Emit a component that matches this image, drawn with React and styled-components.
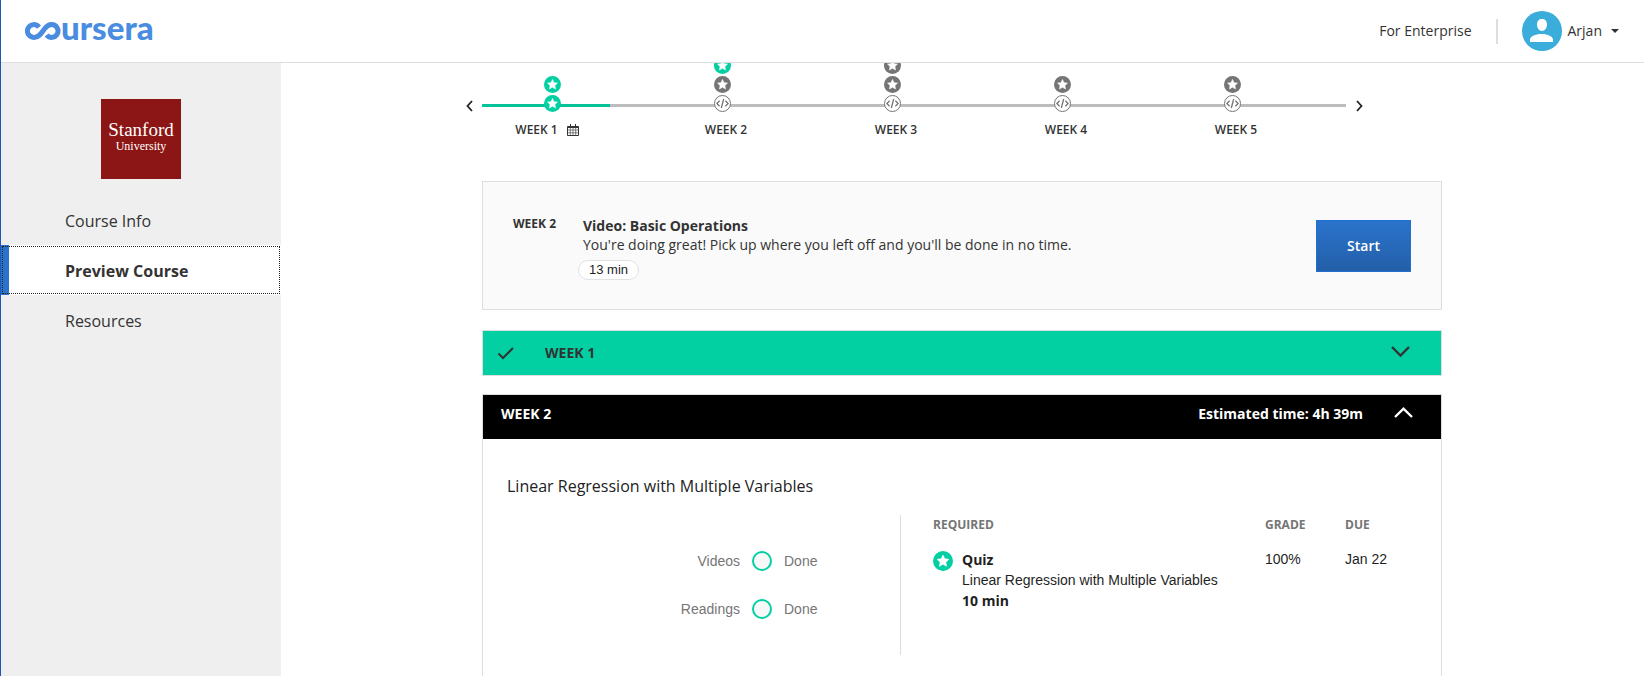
import React from 'react';
import styled, { createGlobalStyle } from 'styled-components';

const green = '#02cfa2';
const line = '#dedede';
const ink = '#333333';
const muted = '#757575';
const sans = '"Open Sans", "Noto Sans", sans-serif';
const arial = '"Liberation Sans", Arial, sans-serif';

const GlobalStyle = createGlobalStyle`
  * { box-sizing: border-box; }
  body {
    margin: 0;
    background: #fff;
    color: ${ink};
    font: 14px/20px ${sans};
  }
  button { font: inherit; cursor: pointer; }
  a { color: inherit; text-decoration: none; }
`;

const Shell = styled.div`
  display: flex;
  flex-direction: column;
  height: 100vh;
  border-left: 1px solid #1f57b5;
`;

const Header = styled.header`
  display: flex;
  align-items: center;
  justify-content: space-between;
  flex: none;
  height: 63px;
  padding: 0 25px 0 24px;
  border-bottom: 1px solid ${line};
`;

const Logo = styled.a`
  display: flex;
  align-items: baseline;
  padding-bottom: 8px;
  color: #4a8de0;
  font: 900 33px/40px Lato, sans-serif;
`;

const LogoMark = styled.svg`
  display: block;
  width: 36px;
  height: 18px;
`;

const HeaderNav = styled.nav`
  display: flex;
  align-items: center;
`;

const Divider = styled.span`
  width: 2px;
  height: 25px;
  margin: 0 24px;
  background: ${line};
`;

const UserButton = styled.button`
  display: flex;
  align-items: center;
  gap: 6px;
  padding: 0;
  border: 0;
  background: none;
  color: ${ink};
`;

const UserName = styled.span`
  margin-right: 3px;
`;

const Columns = styled.div`
  display: flex;
  flex: 1;
  min-height: 0;
`;

const Sidebar = styled.aside`
  flex: none;
  width: 280px;
  padding-top: 36px;
  background: #efefef;
`;

const Partner = styled.div`
  display: flex;
  flex-direction: column;
  align-items: center;
  width: 80px;
  height: 80px;
  margin: 0 auto 16px;
  padding-top: 21px;
  background: #8c1515;
  color: #fff;
  font: 19px/20px "Liberation Serif", serif;
`;

const PartnerSub = styled.span`
  font-size: 12px;
  line-height: 12px;
`;

const SideLink = styled.a`
  display: flex;
  align-items: center;
  height: 50px;
  padding-top: 2px;
  padding-left: ${(p) => (p.$active ? 56 : 64)}px;
  border-left: ${(p) => (p.$active ? '8px solid #2a73cc' : '0')};
  background: ${(p) => (p.$active ? '#fff' : 'none')};
  outline: ${(p) => (p.$active ? '1px dotted #222' : 'none')};
  outline-offset: -2px;
  font-size: 16px;
  font-weight: ${(p) => (p.$active ? 700 : 400)};
`;

const Main = styled.main`
  flex: 1;
  min-width: 0;
  padding-right: 1px;
  overflow: hidden;
`;

const Content = styled.div`
  max-width: 960px;
  margin: 0 auto;
`;

const Timeline = styled.section`
  display: flex;
  margin: 0 0 43px -24px;
`;

const ArrowButton = styled.button`
  display: flex;
  align-items: center;
  justify-content: center;
  width: 24px;
  height: 16px;
  margin-top: 35px;
  padding: ${(p) => (p.$next ? '0 0 0 2px' : '0 2px 0 0')};
  border: 0;
  background: none;
  color: #222;
`;

const Track = styled.div`
  display: grid;
  width: 864px;
`;

const TrackLine = styled.div`
  grid-area: 1 / 1;
  height: 3px;
  margin-top: 41px;
  background: linear-gradient(to right, #06c298 128px, #bdbdbd 128px);
`;

const Stops = styled.ol`
  display: grid;
  grid-area: 1 / 1;
  grid-template-columns: repeat(5, 170px);
  margin: 0;
  padding: 0;
  list-style: none;
`;

const Stack = styled.div`
  display: flex;
  flex-direction: column-reverse;
  gap: 2px;
  height: 49px;
  margin-bottom: 10px;
  padding-left: 62px;
  overflow: hidden;
`;

const StopLabel = styled.div`
  display: flex;
  align-items: center;
  justify-content: center;
  width: 148px;
  font-size: 12px;
  font-weight: 600;
  line-height: 16px;
`;

const Calendar = styled.svg`
  flex: none;
  width: 12px;
  height: 12px;
  margin: 0 18px 0 9px;
`;

const Icon = styled.svg`
  display: block;
  flex: none;
`;

const NextCard = styled.section`
  display: flex;
  align-items: center;
  height: 129px;
  margin-bottom: 20px;
  padding: 0 30px;
  border: 1px solid ${line};
  background: #fafafa;
`;

const CardWeek = styled.div`
  flex: none;
  width: 70px;
  height: 60px;
  font-size: 12px;
  font-weight: 700;
  line-height: 16px;
`;

const CardText = styled.div`
  flex: 1;
  padding-top: 4px;
`;

const CardTitle = styled.h2`
  margin: 0;
  font-size: 14px;
  font-weight: 700;
  line-height: 19px;
`;

const CardBody = styled.p`
  margin: 0;
  line-height: 19px;
`;

const Pill = styled.span`
  display: inline-block;
  margin: 6px 0 0 -5px;
  padding: 0 10px;
  border: 1px solid #e1e1e1;
  border-radius: 10px;
  background: #fff;
  color: #222;
  font: 13px/18px ${arial};
`;

const StartButton = styled.button`
  width: 95px;
  height: 52px;
  border: 1px solid #1f70d0;
  background: linear-gradient(#2a73cc, #245fa8);
  color: #fff;
  font-weight: 600;
`;

const Week = styled.section`
  margin-bottom: 18px;
  border: 1px solid ${line};
`;

const WeekHeader = styled.button`
  display: flex;
  align-items: center;
  width: 100%;
  height: 44px;
  padding: ${(p) => (p.$done ? '0 31px 0 14px' : '0 28px 6px 18px')};
  border: 0;
  background: ${(p) => (p.$done ? green : '#000')};
  color: ${(p) => (p.$done ? ink : '#fff')};
  font-weight: 700;
`;

const WeekName = styled.span`
  margin-left: ${(p) => (p.$indent ? '30px' : '0')};
  margin-right: auto;
`;

const Estimate = styled.span`
  margin-right: 31px;
`;

const WeekBody = styled.div`
  padding: 35px 24px 40px;
`;

const ModuleTitle = styled.h3`
  margin: 0 0 17px;
  color: #222;
  font-size: 16px;
  font-weight: 400;
  line-height: 24px;
`;

const Details = styled.div`
  display: flex;
  min-height: 140px;
`;

const ProgressList = styled.ul`
  display: flex;
  flex: none;
  flex-direction: column;
  gap: 28px;
  width: 394px;
  margin: 0;
  padding: 36px 0 0;
  border-right: 1px solid ${line};
  list-style: none;
`;

const ProgressRow = styled.li`
  display: grid;
  grid-template-columns: 233px 20px 1fr;
  gap: 12px;
  color: ${muted};
  font-family: ${arial};
`;

const ProgressLabel = styled.span`
  text-align: right;
`;

const Ring = styled.span`
  height: 20px;
  border: 2px solid ${green};
  border-radius: 50%;
  background: #f8f8f8;
`;

const Required = styled.table`
  flex: 1;
  align-self: flex-start;
  margin-left: 32px;
  border-collapse: collapse;
  color: #1f1f1f;
  font: 14px/20px ${arial};
`;

const Th = styled.th`
  width: ${(p) => p.$width || 'auto'};
  padding: 2px 0 16px;
  color: ${muted};
  font: 700 12px/16px ${sans};
  text-align: left;
`;

const Td = styled.td`
  padding: 0;
  vertical-align: top;
`;

const Item = styled.div`
  display: flex;
  gap: 9px;
  padding-top: 1px;

  svg {
    margin-top: 1px;
  }
`;

const ItemStrong = styled.div`
  font-family: ${sans};
  font-weight: 700;
`;

const ItemName = styled.div`
  line-height: 21px;
`;

const starPoints = '10,4 11.8,7.8 15.9,8.3 12.9,11.2 13.6,15.3 10,13.3 6.4,15.3 7.1,11.2 4.1,8.3 8.2,7.8';

function StarBadge({ size = 17, color = green }) {
  return (
    <Icon width={size} height={size} viewBox="0 0 20 20" aria-hidden="true">
      <circle cx="10" cy="10" r="10" fill={color} />
      <polygon points={starPoints} fill="#fff" stroke="#fff" strokeWidth="0.6" strokeLinejoin="round" />
    </Icon>
  );
}

function CodeBadge() {
  return (
    <Icon width="17" height="17" viewBox="0 0 17 17" fill="none" stroke="#757575" aria-hidden="true">
      <circle cx="8.5" cy="8.5" r="8" fill="#fff" />
      <path d="M5.6 5.8 2.9 8.5l2.7 2.7M11.4 5.8l2.7 2.7-2.7 2.7M9.7 4 7.3 13" strokeWidth="1.3" />
    </Icon>
  );
}

function Chevron({ d, w, h, stroke }) {
  return (
    <Icon width={w} height={h} viewBox={`0 0 ${w} ${h}`} fill="none" stroke="currentColor" strokeWidth={stroke} aria-hidden="true">
      <path d={d} />
    </Icon>
  );
}

const badges = {
  done: () => <StarBadge />,
  quiz: () => <StarBadge color="#757575" />,
  code: () => <CodeBadge />,
};

const stops = [
  { name: 'WEEK 1', items: ['done', 'done'], calendar: true },
  { name: 'WEEK 2', items: ['code', 'quiz', 'done'] },
  { name: 'WEEK 3', items: ['code', 'quiz', 'quiz'] },
  { name: 'WEEK 4', items: ['code', 'quiz'] },
  { name: 'WEEK 5', items: ['code', 'quiz'] },
];

function Stop({ name, items, calendar }) {
  return (
    <li>
      <Stack>
        {items.map((kind, i) => (
          <React.Fragment key={i}>{badges[kind]()}</React.Fragment>
        ))}
      </Stack>
      <StopLabel>
        {name}
        {calendar && (
          <Calendar viewBox="0 0 12 12" fill="none" stroke="#333" aria-hidden="true">
            <path d="M.5 2.5h11v9H.5zM.5 3.5h11M3.5 0v3M8.5 0v3" />
            <path d="M.5 6h11M.5 8.8h11M3.3 3.5v8M6 3.5v8M8.7 3.5v8" strokeWidth="0.6" />
          </Calendar>
        )}
      </StopLabel>
    </li>
  );
}

export default function App() {
  return (
    <Shell>
      <GlobalStyle />
      <Header>
        <Logo href="#home" aria-label="coursera">
          <LogoMark viewBox="0 0 36 18" fill="none" stroke="currentColor" strokeWidth="5" aria-hidden="true">
            <path d="M14 5.200A6.400 6.400 0 1 0 9 15.400C14 15.400 16.500 11 19.300 7.200 21.500 4 23.500 2.600 26.600 2.600A6.400 6.400 0 1 1 21.600 13" />
          </LogoMark>
          ursera
        </Logo>
        <HeaderNav>
          <a href="#enterprise">For Enterprise</a>
          <Divider />
          <UserButton>
            <Icon width="40" height="40" viewBox="0 0 40 40" aria-hidden="true">
              <circle cx="20" cy="20" r="20" fill="#3aaddb" />
              <path fill="#fff" d="M20 8c3 0 5 2 5 5.500 0 3.500-2 6.500-5 6.500s-5-3-5-6.500C15 10 17 8 20 8ZM8 31v-2.500C8 25.500 13 23 19.500 23S31 25.500 31 28.500V31Z" />
            </Icon>
            <UserName>Arjan</UserName>
            <Icon width="8" height="4" viewBox="0 0 8 4" aria-hidden="true">
              <path d="M0 0h8L4 4Z" fill="#333" />
            </Icon>
          </UserButton>
        </HeaderNav>
      </Header>
      <Columns>
        <Sidebar>
          <Partner>
            Stanford
            <PartnerSub>University</PartnerSub>
          </Partner>
          <nav>
            <SideLink href="#info">Course Info</SideLink>
            <SideLink href="#preview" $active aria-current="page">Preview Course</SideLink>
            <SideLink href="#resources">Resources</SideLink>
          </nav>
        </Sidebar>
        <Main>
          <Content>
            <Timeline>
              <ArrowButton aria-label="Previous weeks">
                <Chevron w={7} h={12} d="M6 1 1.500 6 6 11" stroke={1.8} />
              </ArrowButton>
              <Track>
                <TrackLine />
                <Stops>
                  {stops.map((s) => (
                    <Stop key={s.name} {...s} />
                  ))}
                </Stops>
              </Track>
              <ArrowButton $next aria-label="Next weeks">
                <Chevron w={7} h={12} d="M1 1l4.500 5L1 11" stroke={1.8} />
              </ArrowButton>
            </Timeline>

            <NextCard>
              <CardWeek>WEEK 2</CardWeek>
              <CardText>
                <CardTitle>Video: Basic Operations</CardTitle>
                <CardBody>You're doing great! Pick up where you left off and you'll be done in no time.</CardBody>
                <Pill>13 min</Pill>
              </CardText>
              <StartButton>Start</StartButton>
            </NextCard>

            <Week>
              <WeekHeader $done aria-expanded="false">
                <Chevron w={18} h={14} d="M1.500 7.500 6 12 16 2" stroke={2} />
                <WeekName $indent>WEEK 1</WeekName>
                <Chevron w={19} h={15} d="M1 1l8.500 8.500L18 1" stroke={2.4} />
              </WeekHeader>
            </Week>

            <Week>
              <WeekHeader aria-expanded="true">
                <WeekName>WEEK 2</WeekName>
                <Estimate>Estimated time: 4h 39m</Estimate>
                <Chevron w={19} h={15} d="M1 10 9.500 1.700 18 10" stroke={2.4} />
              </WeekHeader>
              <WeekBody>
                <ModuleTitle>Linear Regression with Multiple Variables</ModuleTitle>
                <Details>
                  <ProgressList>
                    {['Videos', 'Readings'].map((label) => (
                      <ProgressRow key={label}>
                        <ProgressLabel>{label}</ProgressLabel>
                        <Ring />
                        <span>Done</span>
                      </ProgressRow>
                    ))}
                  </ProgressList>
                  <Required>
                    <thead>
                      <tr>
                        <Th>REQUIRED</Th>
                        <Th $width="80px">GRADE</Th>
                        <Th $width="72px">DUE</Th>
                      </tr>
                    </thead>
                    <tbody>
                      <tr>
                        <Td>
                          <Item>
                            <StarBadge size={20} />
                            <div>
                              <ItemStrong>Quiz</ItemStrong>
                              <ItemName>Linear Regression with Multiple Variables</ItemName>
                              <ItemStrong>10 min</ItemStrong>
                            </div>
                          </Item>
                        </Td>
                        <Td>100%</Td>
                        <Td>Jan 22</Td>
                      </tr>
                    </tbody>
                  </Required>
                </Details>
              </WeekBody>
            </Week>
          </Content>
        </Main>
      </Columns>
    </Shell>
  );
}
